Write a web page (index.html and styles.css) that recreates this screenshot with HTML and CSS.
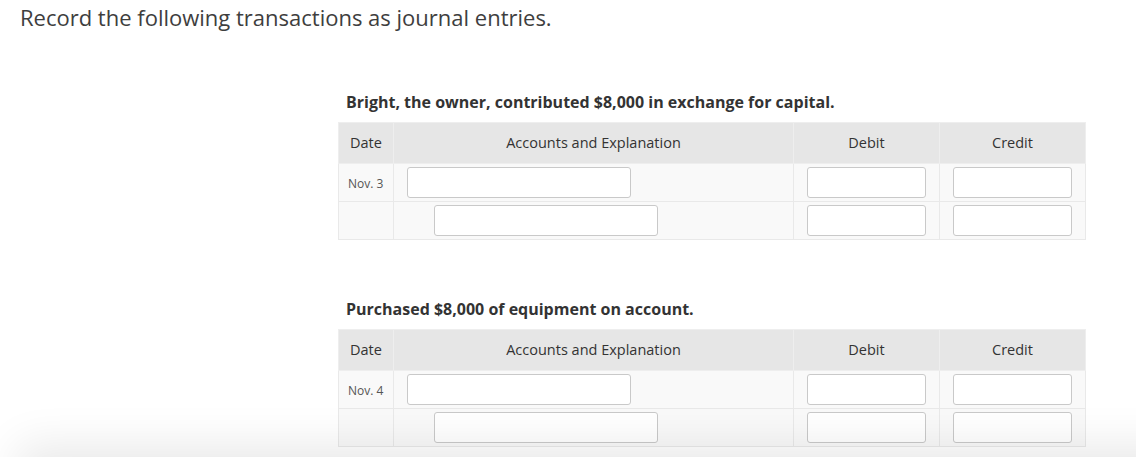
FILE: index.html
```html
<!DOCTYPE html>
<html lang="en">
<head>
<meta charset="utf-8">
<title>Journal entries</title>
<link rel="stylesheet" href="styles.css">
</head>
<body>
<h1 class="prompt">Record the following transactions as journal entries.</h1>

<section class="entry first">
  <h2 class="entry-title">Bright, the owner, contributed $8,000 in exchange for capital.</h2>
  <table class="journal">
    <thead>
      <tr>
        <th class="c-date">Date</th>
        <th class="c-acct">Accounts and Explanation</th>
        <th class="c-num">Debit</th>
        <th class="c-num">Credit</th>
      </tr>
    </thead>
    <tbody>
      <tr>
        <td class="c-date">Nov. 3</td>
        <td class="c-acct"><input class="in-acct" type="text"></td>
        <td class="c-num"><input class="in-num" type="text"></td>
        <td class="c-num"><input class="in-num" type="text"></td>
      </tr>
      <tr>
        <td class="c-date"></td>
        <td class="c-acct indent"><input class="in-acct" type="text"></td>
        <td class="c-num"><input class="in-num" type="text"></td>
        <td class="c-num"><input class="in-num" type="text"></td>
      </tr>
    </tbody>
  </table>
</section>

<section class="entry second">
  <h2 class="entry-title">Purchased $8,000 of equipment on account.</h2>
  <table class="journal">
    <thead>
      <tr>
        <th class="c-date">Date</th>
        <th class="c-acct">Accounts and Explanation</th>
        <th class="c-num">Debit</th>
        <th class="c-num">Credit</th>
      </tr>
    </thead>
    <tbody>
      <tr>
        <td class="c-date">Nov. 4</td>
        <td class="c-acct"><input class="in-acct" type="text"></td>
        <td class="c-num"><input class="in-num" type="text"></td>
        <td class="c-num"><input class="in-num" type="text"></td>
      </tr>
      <tr>
        <td class="c-date"></td>
        <td class="c-acct indent"><input class="in-acct" type="text"></td>
        <td class="c-num"><input class="in-num" type="text"></td>
        <td class="c-num"><input class="in-num" type="text"></td>
      </tr>
    </tbody>
  </table>
</section>

<div class="footer-shadow"></div>
</body>
</html>
```
FILE: styles.css
```css
html, body {
  margin: 0;
  padding: 0;
  background: #ffffff;
}
body {
  font-family: "Open Sans", "Liberation Sans", sans-serif;
  color: #333333;
  overflow: hidden;
  height: 457px;
}
.prompt {
  margin: 0;
  padding: 2px 0 1px 20px;
  font-size: 22px;
  font-weight: 400;
  line-height: 30px;
  color: #3e3e3e;
}
.entry {
  margin-left: 338px;
  width: 747px;
}
.entry.first {
  margin-top: 57px;
}
.entry.second {
  margin-top: 57px;
}
.entry-title {
  margin: 0 0 8px 8px;
  font-size: 16px;
  font-weight: 700;
  line-height: 24px;
  color: #333333;
}
.journal {
  border-collapse: collapse;
  width: 747px;
  table-layout: fixed;
}
.journal th,
.journal td {
  box-sizing: border-box;
  border: 1px solid #e9e9e9;
  padding: 0;
}
.journal th {
  background: #e6e6e6;
  border-color: #eeeeee;
  height: 41px;
  padding-bottom: 2px;
  font-size: 14.5px;
  font-weight: 400;
  color: #333333;
  text-align: center;
}
.journal th.c-date {
  text-align: left;
  padding-left: 11px;
}
.journal td {
  background: #f9f9f9;
  height: 38px;
}
.journal td.c-date {
  font-size: 12px;
  color: #555555;
  padding-left: 9px;
  padding-top: 2px;
  vertical-align: middle;
}
.journal .c-date { width: 55px; }
.journal .c-acct { width: 400px; }
.journal .c-num { width: 146px; }
.journal td.c-acct {
  padding-left: 13px;
}
.journal td.c-acct.indent {
  padding-left: 40px;
}
.journal td.c-num {
  padding-left: 13px;
}
input {
  display: block;
  box-sizing: border-box;
  height: 31px;
  margin: 0;
  border: 1px solid #c9c9c9;
  border-radius: 3px;
  background: #ffffff;
  font-family: inherit;
  font-size: 14px;
  padding: 0 6px;
}
.in-acct { width: 224px; }
.in-num { width: 119px; }

.footer-shadow {
  position: fixed;
  left: 30px;
  right: -60px;
  bottom: -70px;
  height: 70px;
  background: #ffffff;
  box-shadow: 0 0 45px 12px rgba(0, 0, 0, 0.09);
}
```
